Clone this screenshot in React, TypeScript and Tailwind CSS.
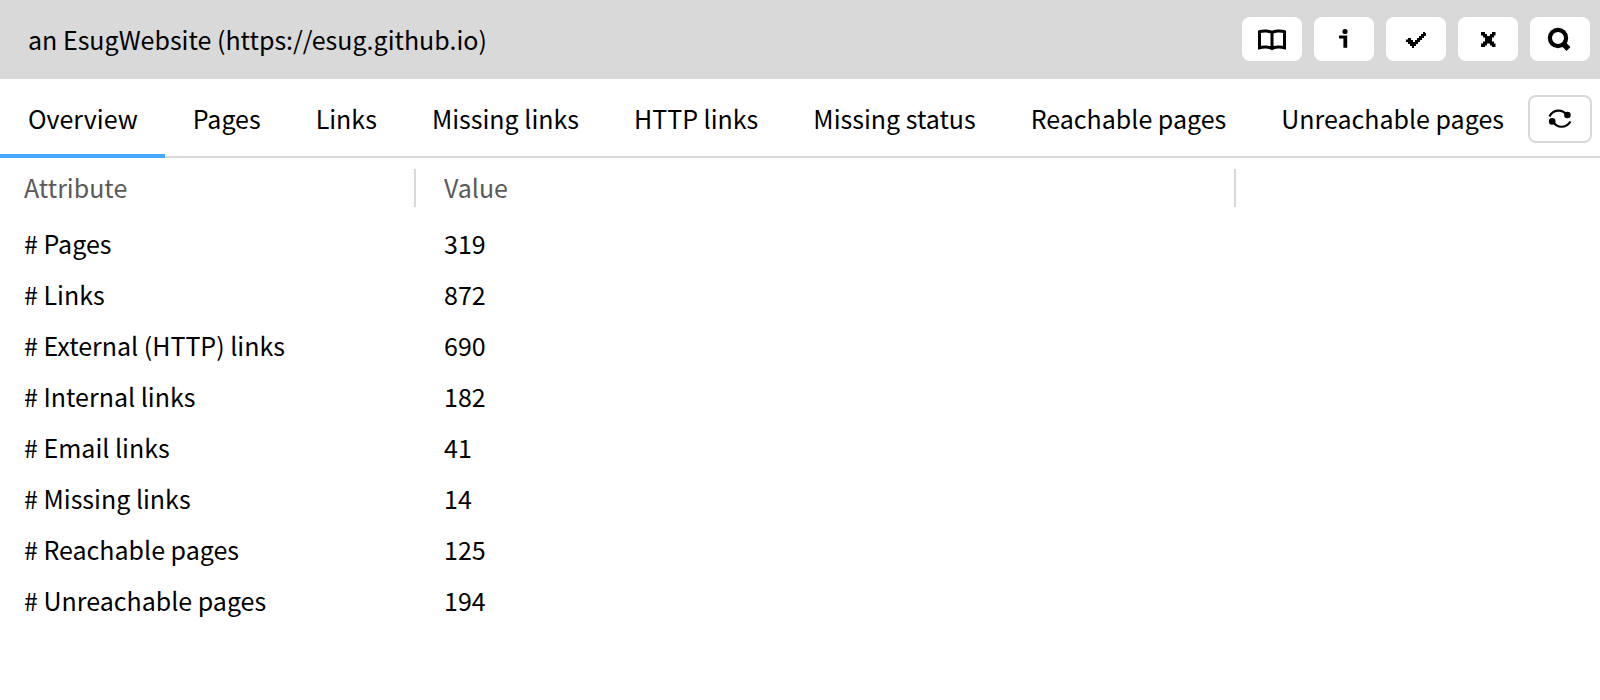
import type { ReactNode } from 'react';

const tabs = ['Overview', 'Pages', 'Links', 'Missing links', 'HTTP links', 'Missing status', 'Reachable pages', 'Unreachable pages'];

const rows: [string, number][] = [
  ['# Pages', 319],
  ['# Links', 872],
  ['# External (HTTP) links', 690],
  ['# Internal links', 182],
  ['# Email links', 41],
  ['# Missing links', 14],
  ['# Reachable pages', 125],
  ['# Unreachable pages', 194],
];

function ToolButton({ label, children }: { label: string; children: ReactNode }) {
  return (
    <button type="button" aria-label={label} className="flex h-11 w-[60px] items-center justify-center rounded-lg bg-white">
      <svg viewBox="0 0 32 32" className="h-8 w-8" aria-hidden="true">
        {children}
      </svg>
    </button>
  );
}

export default function App() {
  return (
    <main className="min-h-screen bg-white font-['Noto_Sans_CJK_SC',sans-serif] text-[25px] leading-9 text-black">
      <header className="flex h-[79px] items-center justify-between bg-[#d9d9d9] pr-[10px] pb-px pl-7">
        <h1>an EsugWebsite (https://esug.github.io)</h1>
        <div className="flex gap-3">
          <ToolButton label="Browse">
            <path
              d="M16 9.5C13.5 7.8 7.5 7.5 3.5 8.8V24.8C7.5 23.6 13.5 23.8 16 25.6C18.5 23.8 24.5 23.6 28.5 24.8V8.8C24.5 7.5 18.5 7.8 16 9.5ZM16 9.5V25.6"
              fill="none"
              stroke="currentColor"
              strokeWidth="3"
              strokeLinejoin="miter"
            />
          </ToolButton>
          <ToolButton label="Inspect">
            <circle cx="17" cy="8.5" r="2.6" />
            <path d="M11 12.5H19.2V24.7H15.4V15.5H11Z" />
          </ToolButton>
          <ToolButton label="Accept">
            <path d="M6 16.500H8V15H11V17H13V19H15V17H17V15H19V13H21V11H23V9H25V10H26V13H24V15H22V17H20V19H18V21H16V23H14V25H12V23H10V21H8V19H6Z" />
          </ToolButton>
          <ToolButton label="Close">
            <path d="M9 9H13V11H15V13H18V11H20V9H23.500V12.500H22V14.500H20V18.500H22V20.500H23.500V24H20V22.500H18V20.500H15V22.500H13V24H9V20.500H11V18.500H13V14.500H11V12.500H9Z" />
          </ToolButton>
          <ToolButton label="Search">
            <circle cx="14" cy="15" r="8.1" fill="none" stroke="currentColor" strokeWidth="4.2" />
            <path d="M19 20.500L24.500 26" stroke="currentColor" strokeWidth="5.5" />
          </ToolButton>
        </div>
      </header>

      <div className="flex h-[79px] items-stretch justify-between border-b-2 border-[#d9d9d9] pr-2">
        <nav role="tablist" className="flex">
          {tabs.map((tab, i) => (
            <button
              key={tab}
              type="button"
              role="tab"
              aria-selected={i === 0}
              className={
                i === 0
                  ? '-mb-0.5 border-b-4 border-[#47a9ff] pt-0.5 pr-[27px] pl-7 whitespace-nowrap'
                  : '-mb-0.5 border-b-4 border-transparent pt-0.5 pr-[27px] pl-7 whitespace-nowrap'
              }
            >
              {tab}
            </button>
          ))}
        </nav>
        <button
          type="button"
          aria-label="Refresh"
          className="mt-4 -ml-7 flex h-12 w-16 shrink-0 items-center justify-center rounded-lg border-2 border-[#d9d9d9]"
        >
          <svg viewBox="0 0 32 32" className="h-8 w-8" aria-hidden="true">
            <path d="M5.5 13.5C9 6.500 18 5.500 23 12M26.5 18.500C22 25.5 13 25.5 9 18.5" fill="none" stroke="currentColor" strokeWidth="2.2" />
            <circle cx="23.4" cy="12" r="3.3" />
            <circle cx="8.2" cy="18.4" r="3.3" />
          </svg>
        </button>
      </div>

      <table className="mt-[11px] w-full table-fixed border-collapse text-left">
        <colgroup>
          <col className="w-[26%]" />
          <col className="w-[51.25%]" />
          <col />
        </colgroup>
        <thead>
          <tr className="text-[#5a5a5a]">
            <th className="pb-[10px] font-normal">
              <div className="h-[38px] border-r-2 border-[#d9d9d9] pl-6">Attribute</div>
            </th>
            <th className="pb-[10px] font-normal">
              <div className="h-[38px] border-r-2 border-[#d9d9d9] pl-7">Value</div>
            </th>
            <td />
          </tr>
        </thead>
        <tbody>
          {rows.map(([name, value]) => (
            <tr key={name} className="h-[51px]">
              <td className="pl-6">{name}</td>
              <td className="pl-7">{value}</td>
              <td />
            </tr>
          ))}
        </tbody>
      </table>
    </main>
  );
}
